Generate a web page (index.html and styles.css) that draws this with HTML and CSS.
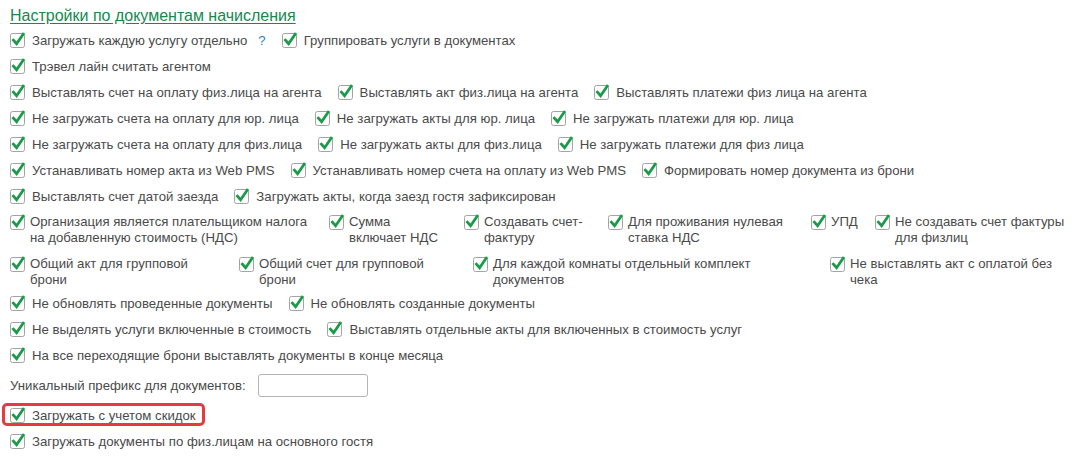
FILE: index.html
```html
<!DOCTYPE html>
<html lang="ru">
<head>
    <meta charset="UTF-8">
    <title>Настройки по документам начисления</title>
    <link rel="stylesheet" href="styles.css">
</head>
<body>
    <svg class="sprite" xmlns="http://www.w3.org/2000/svg">
        <symbol id="cb-on" viewBox="0 0 16 16">
            <rect x="0.5" y="1.5" width="14" height="14" rx="2" fill="#fff" stroke="#a3a3a3"/>
            <path d="M3.4 8.2 L6.6 11.8 L13.2 2.2" fill="none" stroke="#1a9b48" stroke-width="2.8" stroke-linecap="square"/>
        </symbol>
    </svg>

    <div class="settings">
        <h1 class="section-title">Настройки по документам начисления</h1>

        <div class="row">
            <label class="check"><svg class="box"><use href="#cb-on"/></svg>Загружать каждую услугу отдельно<span class="hint">?</span></label>
            <label class="check"><svg class="box"><use href="#cb-on"/></svg>Группировать услуги в документах</label>
        </div>
        <div class="row">
            <label class="check"><svg class="box"><use href="#cb-on"/></svg>Трэвел лайн считать агентом</label>
        </div>
        <div class="row">
            <label class="check"><svg class="box"><use href="#cb-on"/></svg>Выставлять счет на оплату физ.лица на агента</label>
            <label class="check"><svg class="box"><use href="#cb-on"/></svg>Выставлять акт физ.лица на агента</label>
            <label class="check"><svg class="box"><use href="#cb-on"/></svg>Выставлять платежи физ лица на агента</label>
        </div>
        <div class="row">
            <label class="check"><svg class="box"><use href="#cb-on"/></svg>Не загружать счета на оплату для юр. лица</label>
            <label class="check"><svg class="box"><use href="#cb-on"/></svg>Не загружать акты для юр. лица</label>
            <label class="check"><svg class="box"><use href="#cb-on"/></svg>Не загружать платежи для юр. лица</label>
        </div>
        <div class="row">
            <label class="check"><svg class="box"><use href="#cb-on"/></svg>Не загружать счета на оплату для физ.лица</label>
            <label class="check"><svg class="box"><use href="#cb-on"/></svg>Не загружать акты для физ.лица</label>
            <label class="check"><svg class="box"><use href="#cb-on"/></svg>Не загружать платежи для физ лица</label>
        </div>
        <div class="row">
            <label class="check"><svg class="box"><use href="#cb-on"/></svg>Устанавливать номер акта из Web PMS</label>
            <label class="check"><svg class="box"><use href="#cb-on"/></svg>Устанавливать номер счета на оплату из Web PMS</label>
            <label class="check"><svg class="box"><use href="#cb-on"/></svg>Формировать номер документа из брони</label>
        </div>
        <div class="row">
            <label class="check"><svg class="box"><use href="#cb-on"/></svg>Выставлять счет датой заезда</label>
            <label class="check"><svg class="box"><use href="#cb-on"/></svg>Загружать акты, когда заезд гостя зафиксирован</label>
        </div>

        <div class="row tall vat-row">
            <label class="check"><svg class="box"><use href="#cb-on"/></svg><span>Организация является плательщиком налога на добавленную стоимость (НДС)</span></label>
            <label class="check narrow"><svg class="box"><use href="#cb-on"/></svg><span>Сумма включает НДС</span></label>
            <label class="check"><svg class="box"><use href="#cb-on"/></svg><span>Создавать счет-фактуру</span></label>
            <label class="check"><svg class="box"><use href="#cb-on"/></svg><span>Для проживания нулевая ставка НДС</span></label>
            <label class="check"><svg class="box"><use href="#cb-on"/></svg><span>УПД</span></label>
            <label class="check"><svg class="box"><use href="#cb-on"/></svg><span>Не создавать счет фактуры для физлиц</span></label>
        </div>
        <div class="row tall group-row">
            <label class="check"><svg class="box"><use href="#cb-on"/></svg><span>Общий акт для групповой брони</span></label>
            <label class="check"><svg class="box"><use href="#cb-on"/></svg><span>Общий счет для групповой брони</span></label>
            <label class="check"><svg class="box"><use href="#cb-on"/></svg><span>Для каждой комнаты отдельный комплект документов</span></label>
            <label class="check"><svg class="box"><use href="#cb-on"/></svg><span>Не выставлять акт с оплатой без чека</span></label>
        </div>

        <div class="row">
            <label class="check"><svg class="box"><use href="#cb-on"/></svg>Не обновлять проведенные документы</label>
            <label class="check"><svg class="box"><use href="#cb-on"/></svg>Не обновлять созданные документы</label>
        </div>
        <div class="row">
            <label class="check"><svg class="box"><use href="#cb-on"/></svg>Не выделять услуги включенные в стоимость</label>
            <label class="check"><svg class="box"><use href="#cb-on"/></svg>Выставлять отдельные акты для включенных в стоимость услуг</label>
        </div>
        <div class="row">
            <label class="check"><svg class="box"><use href="#cb-on"/></svg>На все переходящие брони выставлять документы в конце месяца</label>
        </div>

        <div class="row prefix-row">
            <label class="field-label" for="prefix">Уникальный префикс для документов:</label>
            <input class="text-field" id="prefix" type="text">
        </div>

        <div class="row">
            <label class="check marked"><svg class="box"><use href="#cb-on"/></svg>Загружать с учетом скидок</label>
        </div>
        <div class="row">
            <label class="check"><svg class="box"><use href="#cb-on"/></svg>Загружать документы по физ.лицам на основного гостя</label>
        </div>
    </div>
</body>
</html>
```

FILE: styles.css
```css
body {
    margin: 0;
    background: #fff;
    font-family: "Liberation Sans", Arial, sans-serif;
    font-size: 13.2px;
    color: #4a4a4a;
}

.sprite {
    display: none;
}

.settings {
    padding: 6px 10px 0;
}

.section-title {
    margin: 0 0 1px;
    font-size: 16px;
    font-weight: normal;
    line-height: 20px;
    color: #17884f;
    text-decoration: underline;
    text-underline-offset: 2px;
}

.row {
    display: flex;
    align-items: center;
    gap: 16px;
    height: 26px;
}

.check {
    display: inline-flex;
    align-items: center;
    white-space: nowrap;
}

.box {
    flex: none;
    width: 16px;
    height: 16px;
    margin-right: 6px;
}

.hint {
    margin-left: 11px;
    color: #2d7fc1;
}

/* two-line rows laid out on fixed columns */
.tall {
    display: grid;
    gap: 0;
    height: auto;
    align-items: start;
    padding: 5px 0 2px;
    line-height: 16px;
}

.tall + .tall {
    padding-top: 8px;
}

.tall .check {
    align-items: flex-start;
    white-space: normal;
    padding-right: 12px;
}

.tall .box {
    margin-right: 4px;
}

.vat-row {
    grid-template-columns: 319px 135px 144px 203px 64px 1fr;
}

.vat-row .narrow {
    padding-right: 22px;
}

.group-row {
    grid-template-columns: 229px 234px 357px 1fr;
}

.group-row .check {
    padding-right: 20px;
}

.prefix-row {
    height: 34px;
    gap: 12px;
}

.text-field {
    width: 110px;
    height: 23px;
    box-sizing: border-box;
    border: 1px solid #b3b3b3;
    border-radius: 3px;
    padding: 0 4px;
    font: inherit;
}

.marked {
    position: relative;
}

.marked::before {
    content: "";
    position: absolute;
    top: -4px;
    bottom: -3px;
    left: -8px;
    right: -9px;
    border: 3px solid #e63a3f;
    border-radius: 5px;
    pointer-events: none;
}
```
